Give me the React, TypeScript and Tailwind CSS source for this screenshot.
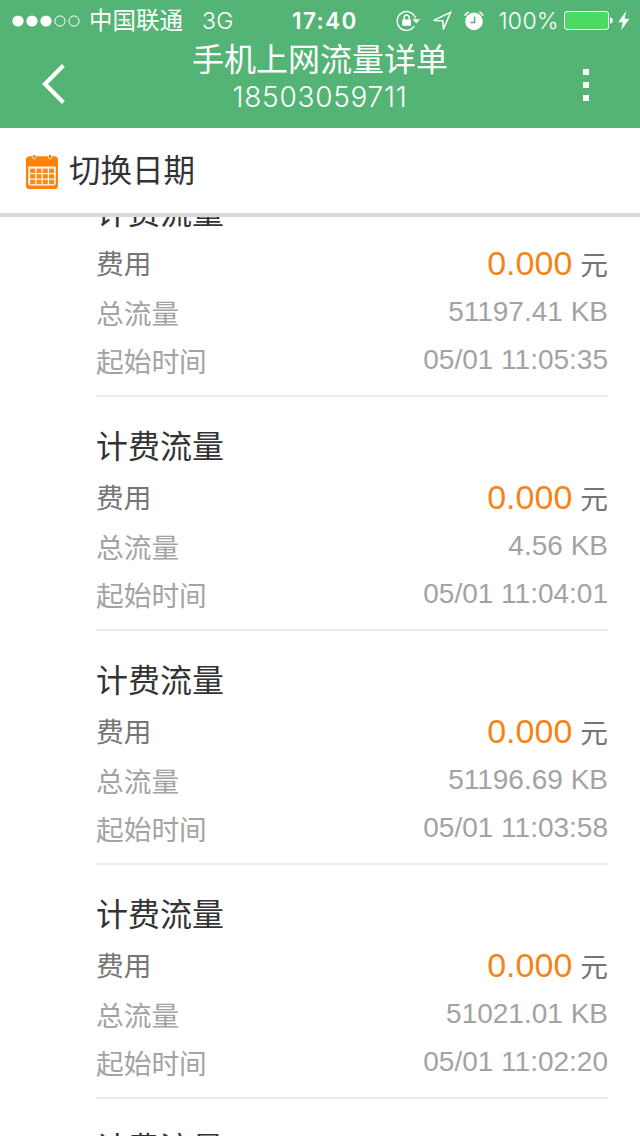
import { Fragment } from 'react';

interface TrafficRecord {
  id: number;
  fee: string;
  total: string;
  startTime: string;
}

const records: TrafficRecord[] = [
  { id: 1, fee: '0.000', total: '51197.41 KB', startTime: '05/01 11:05:35' },
  { id: 2, fee: '0.000', total: '4.56 KB', startTime: '05/01 11:04:01' },
  { id: 3, fee: '0.000', total: '51196.69 KB', startTime: '05/01 11:03:58' },
  { id: 4, fee: '0.000', total: '51021.01 KB', startTime: '05/01 11:02:20' },
];

function SignalDots() {
  return (
    <svg width="68" height="12" viewBox="0 0 68 12" className="shrink-0">
      {[6, 20, 34].map((cx) => (
        <circle key={cx} cx={cx} cy="6" r="5.6" fill="white" />
      ))}
      {[48, 62].map((cx) => (
        <circle key={cx} cx={cx} cy="6" r="5.1" fill="none" stroke="white" />
      ))}
    </svg>
  );
}

function RotationLockIcon() {
  return (
    <svg width="24" height="22" viewBox="0 0 24 22" className="shrink-0" fill="none" stroke="white">
      <path d="M19.6 8.4A9.4 9.4 0 1 0 18.4 16.2" strokeWidth="1.4" />
      <path d="M16.6 9.2h7.4L20.4 13.6z" fill="white" stroke="none" />
      <rect x="6.2" y="9.4" width="8.8" height="6.4" rx="0.6" fill="white" stroke="none" />
      <path d="M8.2 10V7.6a2.5 2.5 0 0 1 5 0V10" strokeWidth="1.5" />
    </svg>
  );
}

function LocationIcon() {
  return (
    <svg width="20" height="20" viewBox="0 0 20 20" className="shrink-0" fill="none" stroke="white">
      <path d="M18.6 1.4L1.6 9.4l9.2.4.6 8.6z" strokeWidth="1.5" strokeLinejoin="miter" />
    </svg>
  );
}

function AlarmIcon() {
  return (
    <svg width="20" height="20" viewBox="0 0 20 20" className="shrink-0" fill="none">
      <circle cx="10" cy="10.4" r="8.8" fill="white" />
      <path d="M10.6 5.4v6H6.4" stroke="#54b475" strokeWidth="1.5" />
      <path d="M1 4.8A5 5 0 0 1 4.8 1.2M19 4.8A5 5 0 0 0 15.2 1.2" stroke="white" strokeWidth="1.6" />
    </svg>
  );
}

function BatteryIcon() {
  return (
    <svg width="49" height="20" viewBox="0 0 49 20" className="shrink-0">
      <rect x="0.5" y="0.5" width="44" height="18" rx="2.5" fill="#4cd964" stroke="white" />
      <path d="M46 6.2c3.8.6 3.8 6 0 6.6z" fill="white" />
    </svg>
  );
}

function BoltIcon() {
  return (
    <svg width="12" height="20" viewBox="0 0 12 20" className="shrink-0">
      <path d="M8.2 0L.2 11.2h4.6L3 19.4 11.4 7.8H6.6z" fill="white" />
    </svg>
  );
}

function CalendarIcon() {
  return (
    <svg width="32" height="34" viewBox="0 0 32 34" className="shrink-0">
      <rect y="1.2" width="32" height="32.8" rx="3.6" fill="#ff8208" />
      <path d="M6.6 0v2.4a1.6 1.6 0 0 0 3.2 0V0M22.4 0v2.4a1.6 1.6 0 0 0 3.2 0V0" fill="#ff8208" stroke="white" strokeWidth="0.7" />
      <path d="M2.2 11.4h27.6v17.2a2 2 0 0 1-2 2H4.2a2 2 0 0 1-2-2z" fill="#fff6ec" />
      {[13.6, 19.2, 24.8].map((y) =>
        [4.2, 10.5, 16.8, 23.1].map((x) => (
          <rect key={`${x}-${y}`} x={x} y={y} width="5" height="4.4" fill="#f58a20" />
        )),
      )}
    </svg>
  );
}

function StatusBar() {
  return (
    <div className="flex h-10 items-center pl-3 pr-[10px] pt-px text-[22px] leading-10">
      <SignalDots />
      <span className="ml-[9px] w-[96px] whitespace-nowrap text-[23.5px]">中国联通</span>
      <span className="ml-[17px] w-[34px] text-[23px] font-light tracking-[0.3px]">3G</span>
      <span className="ml-[56px] w-[68px] text-[22.5px] font-semibold tracking-[1.4px]">17:40</span>
      <span className="ml-[36px] flex items-center">
        <RotationLockIcon />
      </span>
      <span className="ml-[12px] flex items-center">
        <LocationIcon />
      </span>
      <span className="ml-[12px] flex items-center">
        <AlarmIcon />
      </span>
      <span className="ml-auto mr-[5px] text-[23px] font-light tracking-[0.4px]">100%</span>
      <BatteryIcon />
      <span className="ml-[5px]">
        <BoltIcon />
      </span>
    </div>
  );
}

function Header() {
  return (
    <header className="h-32 shrink-0 bg-[#54b475] font-['Inter','Noto_Sans_CJK_SC',sans-serif] text-white">
      <StatusBar />
      <div className="flex h-[88px] justify-between">
        <button type="button" className="flex w-20 justify-end pr-[14px] pt-6" aria-label="返回">
          <svg width="24" height="40" viewBox="0 0 24 40" fill="none">
            <path d="M21.4 1.6L3 20l18.4 18.4" stroke="white" strokeWidth="4.2" />
          </svg>
        </button>
        <div className="pt-px text-center">
          <h1 className="h-[38px] text-[32px] leading-[38px]">手机上网流量详单</h1>
          <p className="text-[28px] font-light leading-[36px] tracking-[0.75px]">18503059711</p>
        </div>
        <button type="button" className="flex w-20 flex-col gap-[7px] pl-[23px] pt-[29px]" aria-label="更多">
          <i className="size-[6px] bg-white" />
          <i className="size-[6px] bg-white" />
          <i className="size-[6px] bg-white" />
        </button>
      </div>
    </header>
  );
}

function RecordTitle() {
  return <h2 className="h-[50px] text-[32px] leading-[50px] text-[#333]">计费流量</h2>;
}

function RecordItem({ record }: { record: TrafficRecord }) {
  const rows = [
    { label: '总流量', value: record.total },
    { label: '起始时间', value: record.startTime },
  ];

  return (
    <li className="h-[234px] shrink-0 border-b-2 border-[#ebebeb] pt-[25px] text-[27.7px]">
      <RecordTitle />
      <div className="flex h-[51px] justify-between leading-[50px] text-[#757575]">
        <span className="pt-0.5">费用</span>
        <span>
          <span className="mr-2 text-[34px] text-[#f58416]">{record.fee}</span>元
        </span>
      </div>
      <dl className="grid grid-cols-[auto_auto] justify-between leading-[48px] text-[#a3a3a3]">
        {rows.map((row) => (
          <Fragment key={row.label}>
            <dt className="h-12 pt-0.5">{row.label}</dt>
            <dd className="-mt-px h-12 text-right text-[28px]">{row.value}</dd>
          </Fragment>
        ))}
      </dl>
    </li>
  );
}

export default function App() {
  return (
    <div className="flex h-[1136px] w-[640px] flex-col overflow-hidden bg-white font-['Liberation_Sans','Noto_Sans_CJK_SC',sans-serif]">
      <Header />
      <div className="flex h-[89px] shrink-0 items-center border-b-4 border-[#d9d9d9] pl-[26px] pt-[3px]">
        <CalendarIcon />
        <span className="ml-[11px] text-[31.5px] text-[#333]">切换日期</span>
      </div>
      <main className="flex min-h-0 flex-1 flex-col overflow-hidden">
        <ul className="-mt-[54px] flex flex-col pl-24 pr-8">
          {records.map((record) => (
            <RecordItem key={record.id} record={record} />
          ))}
          <li className="pt-[25px]">
            <RecordTitle />
          </li>
        </ul>
      </main>
    </div>
  );
}
